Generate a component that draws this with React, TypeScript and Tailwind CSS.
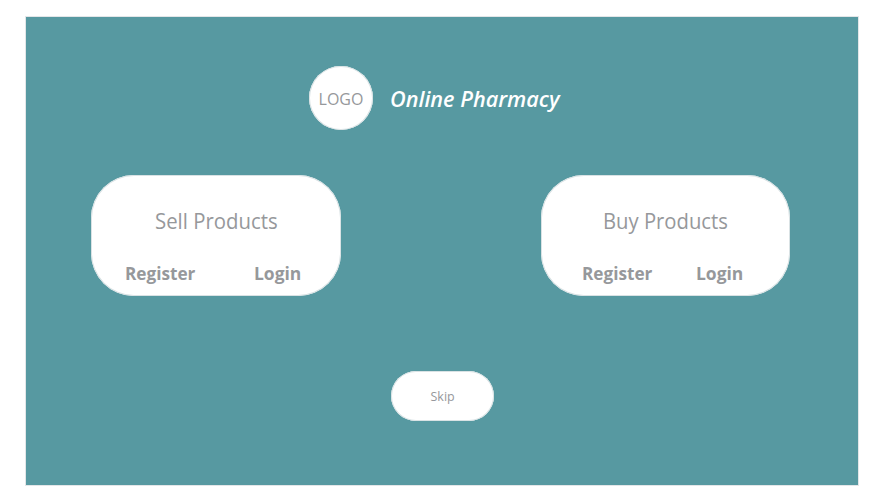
import React from "react";

type CardProps = { title: string; x: string; titleClass: string; registerClass: string; loginClass: string };

function Card({ title, x, titleClass, registerClass, loginClass }: CardProps) {
  return (
    <section className={`${x} h-[121px] w-[249.5px] rounded-[43px] bg-white pt-[30px] text-[#96989b] ring-1 ring-inset ring-[#d9e2e4]`}>
      <h2 className={`h-[30px] w-max origin-left whitespace-nowrap text-[22px] leading-[30px] ${titleClass}`}>{title}</h2>
      <div className="mt-[26px] flex text-[18px] font-bold leading-[24px]">
        <button className={`w-[70px] origin-left scale-x-[0.955] whitespace-nowrap text-left ${registerClass}`}>Register</button>
        <button className={`origin-left scale-x-[0.97] whitespace-nowrap text-left ${loginClass}`}>Login</button>
      </div>
    </section>
  );
}

export default function App() {
  return (
    <div className="h-[500px] w-[889px] bg-white pl-[26px] pt-[17px] font-['Open_Sans','Noto_Sans',sans-serif]">
      <main className="h-[468px] w-[832px] bg-[#5799a1] pt-[49px] outline outline-1 outline-[#e3e6e8]">
        <header className="ml-[283px] flex h-[64px] items-center">
          <div className="flex size-[64px] items-center justify-center rounded-full bg-white pt-[2px] text-[16px] text-[#96989b] ring-1 ring-inset ring-[#d9e2e4]">LOGO</div>
          <h1 className="ml-[17px] origin-left scale-x-[1.03] whitespace-nowrap pt-[4px] text-[21px] font-semibold italic text-white">Online Pharmacy</h1>
        </header>
        <div className="mt-[45px] flex">
          <Card title="Sell Products" x="ml-[65px]" titleClass="ml-[64px] scale-x-[0.925]" registerClass="ml-[34px]" loginClass="ml-[59px]" />
          <Card title="Buy Products" x="ml-[200px]" titleClass="ml-[62.5px] scale-x-[0.92]" registerClass="ml-[41.5px]" loginClass="ml-[44px]" />
        </div>
        <button className="ml-[365px] mt-[75px] flex h-[49.5px] w-[102.5px] items-center justify-center rounded-full bg-white pt-[2px] text-[13px] text-[#96989b] ring-1 ring-inset ring-[#d9e2e4]"><span className="scale-x-[0.96]">Skip</span></button>
      </main>
    </div>
  );
}
